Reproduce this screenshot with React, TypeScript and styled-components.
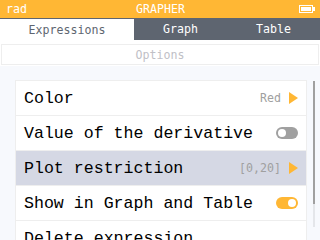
import React from 'react';
import styled, { createGlobalStyle } from 'styled-components';

const GlobalStyle = createGlobalStyle`
  html, body {
    margin: 0;
    padding: 0;
    background: #F7F9FD;
  }
  body {
    font-family: "Liberation Mono", "DejaVu Sans Mono", monospace;
  }
`;

const smallFont = `
  font-family: "DejaVu Sans Mono", "Liberation Mono", monospace;
  font-size: 11.6px;
`;

const Screen = styled.div`
  width: 320px;
  height: 240px;
  overflow: hidden;
  display: flex;
  flex-direction: column;
  background: #F7F9FD;
  & > * {
    flex-shrink: 0;
  }
`;

const TitleBar = styled.div`
  height: 18px;
  background: #FFB734;
  display: grid;
  grid-template-columns: 1fr auto 1fr;
  align-items: center;
  padding: 0 5px 0 6px;
  color: #fff;
  ${smallFont}
`;

const TitleCenter = styled.span`
  text-align: center;
`;

const Battery = styled.div`
  justify-self: end;
  display: flex;
  align-items: center;
`;

const TabBar = styled.div`
  height: 22px;
  background: #5E6570;
  display: flex;
`;

const Tab = styled.div<{ $active?: boolean; $w: number }>`
  width: ${(p) => p.$w}px;
  margin-top: ${(p) => (p.$active ? 1 : 0)}px;
  background: ${(p) => (p.$active ? '#fff' : 'transparent')};
  color: ${(p) => (p.$active ? '#5E6570' : '#fff')};
  display: flex;
  align-items: center;
  justify-content: center;
  ${smallFont}
`;

const HeaderArea = styled.div`
  background: #fff;
  padding: 4px 1px 1px 1px;
`;

const OptionsBox = styled.div`
  height: 19px;
  border: 1px solid #EEEEEE;
  display: flex;
  align-items: center;
  justify-content: center;
  color: #C0C0C6;
  ${smallFont}
`;

const Body = styled.div`
  flex: 1;
  display: flex;
  padding: 14px 0 0 15px;
  gap: 6px;
`;

const List = styled.div`
  width: 290px;
  border: 1px solid #EEEEEE;
  border-bottom: none;
  background: #fff;
  align-self: flex-start;
`;

const Row = styled.div<{ $selected?: boolean }>`
  height: 34px;
  border-bottom: 1px solid #EEEEEE;
  background: ${(p) => (p.$selected ? '#D5D8E4' : '#fff')};
  display: flex;
  align-items: center;
  padding: 0 8px 0 8px;
  font-size: 16.6px;
  color: #000;
`;

const Label = styled.span`
  flex: 1;
  white-space: nowrap;
`;

const Accessory = styled.span`
  color: #A0A0A0;
  margin-right: 8px;
  ${smallFont}
`;

const Arrow = styled.div`
  width: 0;
  height: 0;
  border-top: 6px solid transparent;
  border-bottom: 6px solid transparent;
  border-left: 9px solid #FFB734;
`;

const Switch = styled.div<{ $on?: boolean }>`
  width: 22px;
  height: 12px;
  border-radius: 6px;
  background: ${(p) => (p.$on ? '#FFB734' : '#A0A0A0')};
  display: flex;
  align-items: center;
  justify-content: ${(p) => (p.$on ? 'flex-end' : 'flex-start')};
  padding: 0 2px;
  box-sizing: border-box;
`;

const Knob = styled.div`
  width: 8px;
  height: 8px;
  border-radius: 50%;
  background: #fff;
`;

const ScrollTrack = styled.div`
  width: 2px;
  height: 146px;
  margin-top: 1px;
  background: #E4E6EA;
  display: flex;
`;

const ScrollThumb = styled.div`
  width: 2px;
  height: 123px;
  background: #A0A0A0;
`;

export default function App() {
  return (
    <Screen>
      <GlobalStyle />
      <TitleBar>
        <span>rad</span>
        <TitleCenter>GRAPHER</TitleCenter>
        <Battery>
          <svg width="16" height="8" viewBox="0 0 16 8">
            <rect x="0.5" y="0.5" width="13" height="7" fill="none" stroke="#fff" />
            <rect x="2" y="2" width="10" height="4" fill="#fff" />
            <rect x="14" y="2" width="2" height="4" fill="#fff" />
          </svg>
        </Battery>
      </TitleBar>
      <TabBar>
        <Tab $active $w={134}>Expressions</Tab>
        <Tab $w={93}>Graph</Tab>
        <Tab $w={93}>Table</Tab>
      </TabBar>
      <HeaderArea>
        <OptionsBox>Options</OptionsBox>
      </HeaderArea>
      <Body>
        <List>
          <Row>
            <Label>Color</Label>
            <Accessory>Red</Accessory>
            <Arrow />
          </Row>
          <Row>
            <Label>Value of the derivative</Label>
            <Switch><Knob /></Switch>
          </Row>
          <Row $selected>
            <Label>Plot restriction</Label>
            <Accessory>[0,20]</Accessory>
            <Arrow />
          </Row>
          <Row>
            <Label>Show in Graph and Table</Label>
            <Switch $on><Knob /></Switch>
          </Row>
          <Row>
            <Label>Delete expression</Label>
          </Row>
        </List>
        <ScrollTrack>
          <ScrollThumb />
        </ScrollTrack>
      </Body>
    </Screen>
  );
}
